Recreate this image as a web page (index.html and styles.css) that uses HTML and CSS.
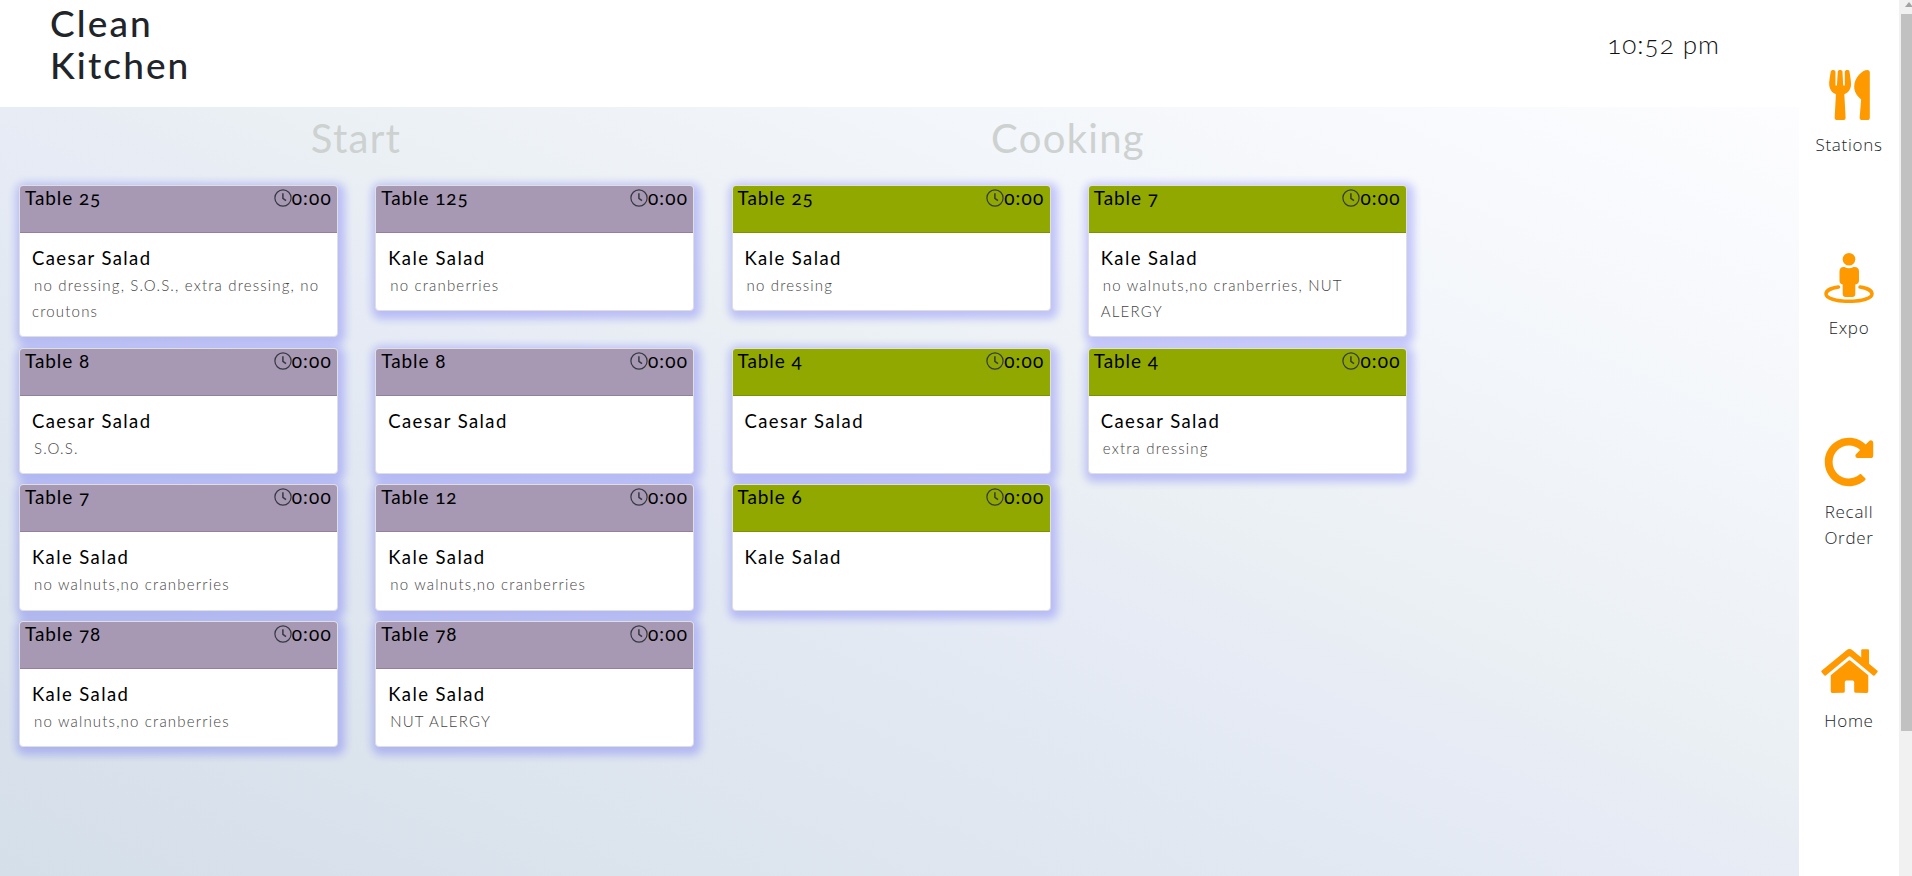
FILE: index.html
```html
<!DOCTYPE html>
<html lang="en">
<head>
<meta charset="utf-8">
<title>Clean Kitchen</title>
<link rel="stylesheet" href="styles.css">
</head>
<body>
<svg class="defs" width="0" height="0">
  <symbol id="clock" viewBox="0 0 18 18"><circle cx="9" cy="9" r="8.1" fill="none" stroke="currentColor" stroke-width="1.2"/><path d="M8.9 4.2V9.4L12 11.7" fill="none" stroke="currentColor" stroke-width="1.5"/></symbol>
</svg>
<div class="app">
  <div class="content">
    <header class="top">
      <h1 class="brand">Clean Kitchen</h1>
      <div class="time">10:52 pm</div>
    </header>
    <main class="board">
      <div class="stages"><h2 class="stage stage-start">Start</h2><h2 class="stage stage-cooking">Cooking</h2></div>
      <div class="tickets">
        <article class="card start"><div class="head"><span class="table">Table 25</span><span class="timer"><svg class="clock"><use href="#clock"/></svg>0:00</span></div><div class="body"><h3>Caesar Salad</h3><p>no dressing, S.O.S., extra dressing, no<br>croutons</p></div></article>
        <article class="card start"><div class="head"><span class="table">Table 125</span><span class="timer"><svg class="clock"><use href="#clock"/></svg>0:00</span></div><div class="body"><h3>Kale Salad</h3><p>no cranberries</p></div></article>
        <article class="card cooking"><div class="head"><span class="table">Table 25</span><span class="timer"><svg class="clock"><use href="#clock"/></svg>0:00</span></div><div class="body"><h3>Kale Salad</h3><p>no dressing</p></div></article>
        <article class="card cooking"><div class="head"><span class="table">Table 7</span><span class="timer"><svg class="clock"><use href="#clock"/></svg>0:00</span></div><div class="body"><h3>Kale Salad</h3><p>no walnuts,no cranberries, NUT<br>ALERGY</p></div></article>

        <article class="card start"><div class="head"><span class="table">Table 8</span><span class="timer"><svg class="clock"><use href="#clock"/></svg>0:00</span></div><div class="body"><h3>Caesar Salad</h3><p>S.O.S.</p></div></article>
        <article class="card start"><div class="head"><span class="table">Table 8</span><span class="timer"><svg class="clock"><use href="#clock"/></svg>0:00</span></div><div class="body"><h3>Caesar Salad</h3><p></p></div></article>
        <article class="card cooking"><div class="head"><span class="table">Table 4</span><span class="timer"><svg class="clock"><use href="#clock"/></svg>0:00</span></div><div class="body"><h3>Caesar Salad</h3><p></p></div></article>
        <article class="card cooking"><div class="head"><span class="table">Table 4</span><span class="timer"><svg class="clock"><use href="#clock"/></svg>0:00</span></div><div class="body"><h3>Caesar Salad</h3><p>extra dressing</p></div></article>

        <article class="card start"><div class="head"><span class="table">Table 7</span><span class="timer"><svg class="clock"><use href="#clock"/></svg>0:00</span></div><div class="body"><h3>Kale Salad</h3><p>no walnuts,no cranberries</p></div></article>
        <article class="card start"><div class="head"><span class="table">Table 12</span><span class="timer"><svg class="clock"><use href="#clock"/></svg>0:00</span></div><div class="body"><h3>Kale Salad</h3><p>no walnuts,no cranberries</p></div></article>
        <article class="card cooking"><div class="head"><span class="table">Table 6</span><span class="timer"><svg class="clock"><use href="#clock"/></svg>0:00</span></div><div class="body"><h3>Kale Salad</h3><p></p></div></article>

        <article class="card start first"><div class="head"><span class="table">Table 78</span><span class="timer"><svg class="clock"><use href="#clock"/></svg>0:00</span></div><div class="body"><h3>Kale Salad</h3><p>no walnuts,no cranberries</p></div></article>
        <article class="card start"><div class="head"><span class="table">Table 78</span><span class="timer"><svg class="clock"><use href="#clock"/></svg>0:00</span></div><div class="body"><h3>Kale Salad</h3><p>NUT ALERGY</p></div></article>
      </div>
    </main>
  </div>
  <nav class="side">
    <a class="link"><svg class="icon" viewBox="0 0 416 512" width="41" height="50"><path d="M207.900 15.200c.8 4.700 16.100 94.500 16.100 128.800 0 52.300-27.800 89.600-68.900 104.600L168 486.700c.7 13.700-10.200 25.300-24 25.300H80c-13.700 0-24.700-11.500-24-25.300l12.900-238.100C27.700 233.600 0 196.200 0 144 0 109.600 15.300 19.900 16.100 15.200 19.300-5.100 61.400-5.400 64 16.300v141.200c1.300 3.400 15.100 3.200 16 0 1.400-25.300 7.900-139.200 8-141.800 3.300-20.800 44.700-20.800 47.900 0 .2 2.700 6.600 116.500 8 141.800.9 3.200 14.800 3.400 16 0V16.300c2.600-21.600 44.800-21.400 48-1.100zm119.200 285.700l-15 185.100c-1.200 14 9.900 26 23.900 26h56c13.300 0 24-10.700 24-24V24c0-13.200-10.700-24-24-24-82.500 0-221.400 178.500-64.900 300.900z"/></svg><span>Stations</span></a>
    <a class="link"><svg class="icon" viewBox="0 0 50 50" width="50" height="50"><circle cx="25" cy="6.300" r="6.300"/><path d="M19.500 14H20.500Q25 16.500 29.500 14H30.500Q35 14 35 18.500V27.500Q35 31 31.300 31.400V41Q31.300 44 28.300 44H21.700Q18.700 44 18.700 41V31.400Q15.500 31 15.500 27.500V18.500Q15.500 14 19.500 14Z"/><path d="M14.500 34C7 35 2 37.700 2 40.900C2 45.200 12 48.300 25 48.300S48 45.200 48 40.900C48 37.700 43 35 36 34" fill="none" stroke="currentColor" stroke-width="3.500" stroke-linecap="round"/></svg><span>Expo</span></a>
    <a class="link recall"><svg class="icon" viewBox="0 0 512 512" width="50" height="50"><path d="M256.455 8c66.269.119 126.437 26.233 170.859 68.685l35.715-35.715C478.149 25.851 504 36.559 504 57.941V192c0 13.255-10.745 24-24 24H345.941c-21.382 0-32.090-25.851-16.971-40.971l41.750-41.750c-30.864-28.899-70.801-44.907-113.230-45.273-92.398-.798-170.283 73.977-169.484 169.442C88.764 348.009 162.184 424 256 424c41.127 0 79.997-14.678 110.629-41.556 4.743-4.161 11.906-3.908 16.368.553l39.662 39.662c4.872 4.872 4.631 12.815-.482 17.433C378.202 479.813 319.926 504 256 504 119.034 504 8.001 392.967 8 256.002 7.999 119.193 119.646 7.755 256.455 8z"/></svg><span>Recall<br>Order</span></a>
    <a class="link home"><svg class="icon" viewBox="0 0 576 512" width="57" height="50"><path d="M280.370 148.260L96 300.110V464a16 16 0 0 0 16 16l112.060-.290a16 16 0 0 0 15.920-16V368a16 16 0 0 1 16-16h64a16 16 0 0 1 16 16v95.640a16 16 0 0 0 16 16.050L464 480a16 16 0 0 0 16-16V300L295.670 148.260a12.190 12.190 0 0 0-15.300 0zM571.600 251.470L488 182.560V44.050a12 12 0 0 0-12-12h-56a12 12 0 0 0-12 12v72.610L318.470 43a48 48 0 0 0-61 0L4.340 251.470a12 12 0 0 0-1.600 16.900l25.500 31A12 12 0 0 0 45.150 301l235.220-193.740a12.190 12.190 0 0 1 15.300 0L530.900 301a12 12 0 0 0 16.900-1.600l25.500-31a12 12 0 0 0-1.700-16.930z"/></svg><span>Home</span></a>
  </nav>
  <div class="scrollbar"><div class="arrow"></div><div class="thumb"></div></div>
</div>
</body>
</html>
```
FILE: styles.css
```css
* { box-sizing: border-box; }
body { margin: 0; overflow: hidden; font-family: Lato, sans-serif; font-variant-numeric: oldstyle-nums; color: #212529; background: #fff; }
h1, h2, h3, p { margin: 0; font-weight: 400; }
.defs { display: none; }
.app { display: flex; height: 876px; }
.content { width: 1799px; display: flex; flex-direction: column; }
.top { height: 107px; display: flex; justify-content: space-between; padding: 2px 79px 0 50px; }
.brand { width: 160px; font-size: 37px; line-height: 42px; font-weight: 500; letter-spacing: 2.100px; }
.time { padding-top: 27px; font-size: 26px; line-height: 30px; font-weight: 300; letter-spacing: 1px; white-space: nowrap; color: #111; }
.board { flex: 1; background: linear-gradient(to top right, #d5dfe9 0%, #e6ebf5 48%, #ebf0f4 58%, #f3f6fa 76%, #fdfdff 100%); }
.stages { display: flex; height: 78px; padding-top: 8px; line-height: 46px; color: #cdd1d0; }
.stage { width: 712px; font-size: 40px; letter-spacing: 1.300px; text-align: center; }
.tickets { display: grid; grid-template-columns: repeat(4, 356.250px); row-gap: 10.200px; padding-left: 19px; align-items: start; }
.first { grid-column: 1; }
.card { width: 319px; border: 1px solid #dfdfdf; border-radius: 4px; background: #fff; box-shadow: 2px 3px 8px 5px rgba(0, 0, 255, .2); color: #000; font-size: 19px; letter-spacing: .9px; }
.head { height: 47px; display: flex; justify-content: space-between; padding: 0 5px; border-bottom: 1px solid #937f9f; border-radius: 3px 3px 0 0; background: #a798b4; line-height: 24px; }
.cooking .head { background: #90a800; border-color: #7d9200; }
.timer { display: flex; letter-spacing: 1.200px; }
.clock { width: 18px; height: 18px; margin-top: 3px; color: #343a40; }
.body { padding: 12px 12px 12.400px; }
h3 { font-size: 18.500px; line-height: 26px; letter-spacing: 1.400px; }
p { min-height: 26px; margin: 1px -4px 0 0; text-indent: 2px; font-size: 15px; line-height: 26px; color: #444; font-weight: 300; letter-spacing: 1.180px; }
.side { width: 100px; padding-top: 70px; display: flex; flex-direction: column; gap: 88px; align-items: center; font-family: "Open Sans", sans-serif; font-weight: 300; }
.link { display: flex; flex-direction: column; align-items: center; gap: 12px; font-size: 17px; line-height: 26px; letter-spacing: .7px; text-align: center; color: #212529; }
.link + .link { margin-top: 7px; }
.side .recall { margin-top: 8px; }
.icon { flex: none; fill: #ff9900; color: #ff9900; }
.scrollbar { width: 13px; padding-left: 2px; background: #f1f1f1; }
.arrow { width: 0; height: 0; margin: 2px 0 7px 4px; border: 4px solid transparent; border-top: 0; border-bottom: 5px solid #a3a3a3; }
.thumb { height: 717px; background: #c1c1c1; }
```
